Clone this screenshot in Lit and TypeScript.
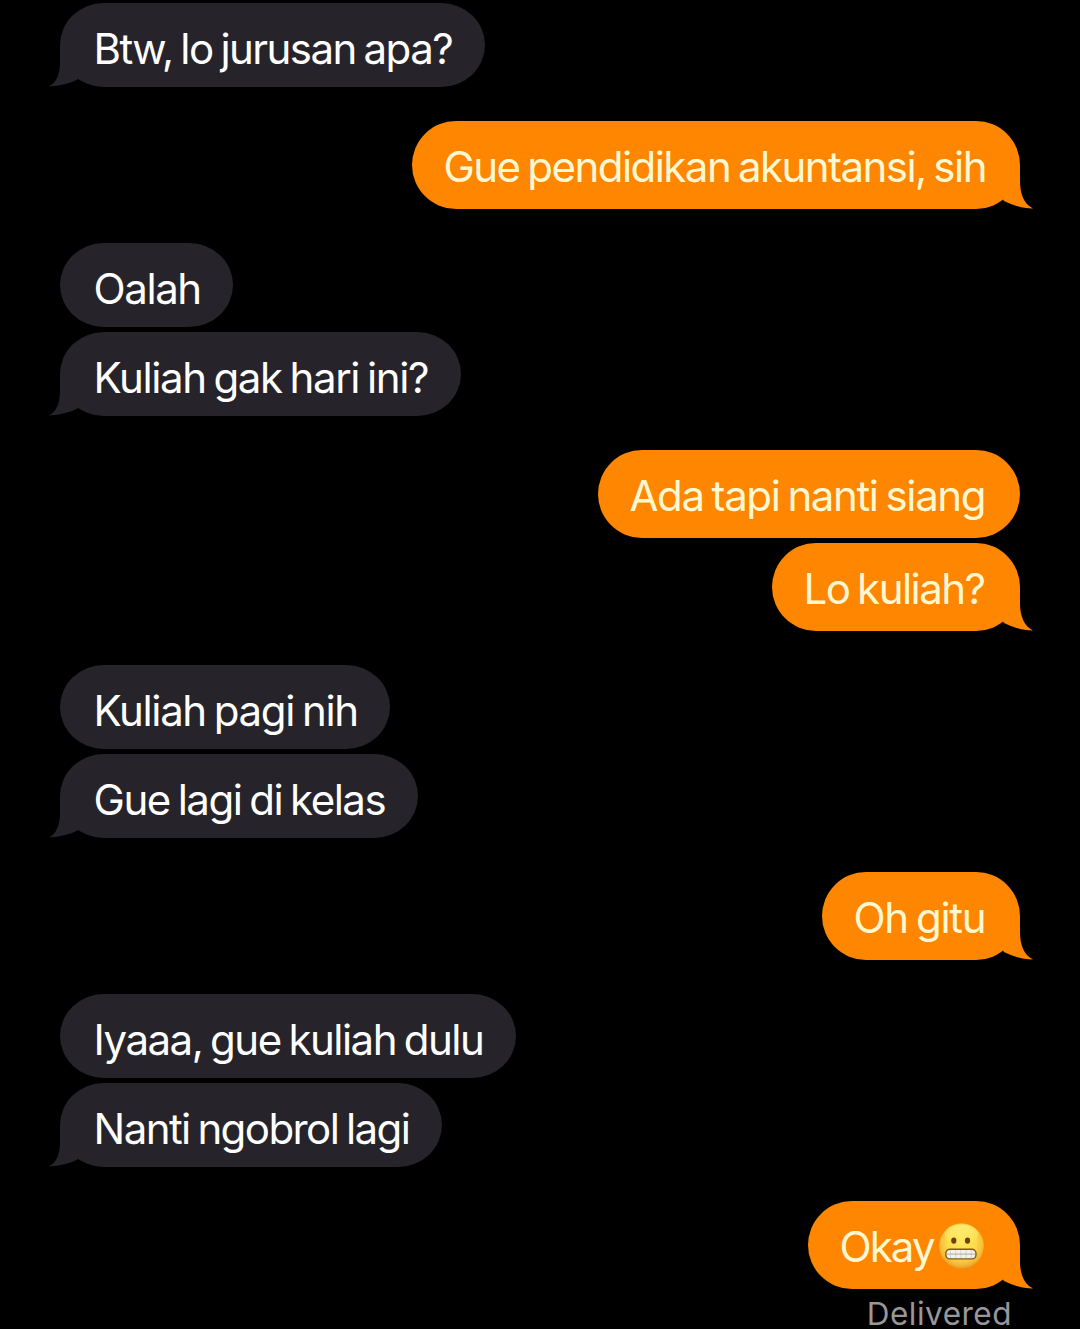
import { LitElement, html, css, svg, nothing } from "lit";

interface Message {
  text: string;
  width: number;
  tracking: number;
  emoji?: boolean;
}

interface Group {
  side: "in" | "out";
  messages: Message[];
}

const conversation: Group[] = [
  { side: "in", messages: [{ text: "Btw, lo jurusan apa?", width: 425, tracking: -1.55 }] },
  { side: "out", messages: [{ text: "Gue pendidikan akuntansi, sih", width: 608, tracking: -1.54 }] },
  {
    side: "in",
    messages: [
      { text: "Oalah", width: 173, tracking: -1.42 },
      { text: "Kuliah gak hari ini?", width: 401, tracking: -1.4 },
    ],
  },
  {
    side: "out",
    messages: [
      { text: "Ada tapi nanti siang", width: 422, tracking: -1.38 },
      { text: "Lo kuliah?", width: 248, tracking: -1.54 },
    ],
  },
  {
    side: "in",
    messages: [
      { text: "Kuliah pagi nih", width: 330, tracking: -1.36 },
      { text: "Gue lagi di kelas", width: 358, tracking: -1.48 },
    ],
  },
  { side: "out", messages: [{ text: "Oh gitu", width: 198, tracking: -1.27 }] },
  {
    side: "in",
    messages: [
      { text: "Iyaaa, gue kuliah dulu", width: 456, tracking: -1.51 },
      { text: "Nanti ngobrol lagi", width: 382, tracking: -1.58 },
    ],
  },
  { side: "out", messages: [{ text: "Okay", width: 212, tracking: -1.9, emoji: true }] },
];

const grimace = html`<svg class="emoji" viewBox="0 0 45 46" role="img" aria-label="😬">
  <defs>
    <radialGradient id="face" cx="50%" cy="42%" r="58%">
      <stop offset="0" stop-color="#ffe65c" />
      <stop offset="0.55" stop-color="#fddb4a" />
      <stop offset="0.85" stop-color="#f5bb35" />
      <stop offset="1" stop-color="#e39a25" />
    </radialGradient>
    <linearGradient id="shine" x1="0" y1="0" x2="0" y2="1">
      <stop offset="0" stop-color="#fff27c" stop-opacity="0.8" />
      <stop offset="1" stop-color="#fff27c" stop-opacity="0" />
    </linearGradient>
  </defs>
  <ellipse cx="22.5" cy="23" rx="22.3" ry="22.8" fill="url(#face)" />
  <ellipse cx="22.5" cy="12" rx="16.5" ry="10.5" fill="url(#shine)" />
  <ellipse cx="14.8" cy="17.6" rx="2.6" ry="3.2" fill="#6b4207" />
  <ellipse cx="28.5" cy="17.6" rx="2.6" ry="3.2" fill="#6b4207" />
  <rect x="6.8" y="26.3" width="30.2" height="9.6" rx="4.2" fill="#f3f2ee" stroke="#80591d" stroke-width="1.4" />
  ${[11.5, 16.7, 21.9, 27.1, 32.3].map(
    (x) => svg`<path d="M${x} 27.2V35" stroke="#cdc9be" stroke-width="0.7" />`,
  )}
  <path d="M7.8 31.1H36" stroke="#aaa391" stroke-width="0.9" />
</svg>`;

const incomingTail = html`<svg class="tail" viewBox="0 0 40 44">
  <path d="M11 2V19C11 31 7.500 39.500 0 43.400C10.500 43 20.500 40.500 29 36.200L40 20V2Z" />
</svg>`;

const outgoingTail = html`<svg class="tail" viewBox="0 0 42 46">
  <path d="M29 2V18C29 31 33 41 42 45.500C32 45.500 22 42.500 13 38L2 20V2Z" />
</svg>`;

class ChatBubble extends LitElement {
  static properties = {
    message: { attribute: false },
    side: { type: String },
    tail: { type: Boolean },
  };

  declare message: Message;
  declare side: "in" | "out";
  declare tail: boolean;

  static styles = css`
    :host {
      display: block;
    }
    .bubble {
      position: relative;
      box-sizing: border-box;
      display: flex;
      align-items: flex-start;
      border-radius: 44px / 42px;
      font-family: Inter, "Liberation Sans", sans-serif;
      font-size: 42px;
      font-weight: 400;
      word-spacing: -2.5px;
      white-space: nowrap;
    }
    .in {
      height: 84px;
      padding: 6px 0 0 33.6px;
      line-height: 79px;
      background: #26242a;
      color: #fff;
    }
    .out {
      height: 88px;
      padding: 2px 0 0 31.5px;
      line-height: 87px;
      border-radius: 44px;
      background: #ff8600;
      color: #fff8d2;
    }
    .tail {
      position: absolute;
      bottom: 0;
    }
    .in .tail {
      left: -11px;
      width: 40px;
      height: 44px;
      fill: #26242a;
    }
    .out .tail {
      right: -13px;
      width: 42px;
      height: 46px;
      fill: #ff8600;
    }
    .emoji {
      width: 45px;
      height: 46px;
      margin: 19.5px 0 0 5px;
      flex: none;
    }
  `;

  render() {
    const { text, width, tracking, emoji } = this.message;
    return html`<div class="bubble ${this.side}" style="width:${width}px;letter-spacing:${tracking}px">
      ${this.tail ? (this.side === "in" ? incomingTail : outgoingTail) : nothing}
      <span>${text}</span>${emoji ? grimace : nothing}
    </div>`;
  }
}

class AppRoot extends LitElement {
  static styles = css`
    :host {
      display: block;
      height: 1329px;
      overflow: hidden;
      background: #000;
    }
    .thread {
      display: flex;
      flex-direction: column;
      gap: 34px;
      padding: 3px 60px 0;
    }
    .group {
      display: flex;
      flex-direction: column;
      gap: 5px;
    }
    .in {
      align-items: flex-start;
    }
    .out {
      align-items: flex-end;
    }
    .status {
      padding: 9px 68px 0 0;
      text-align: right;
      font: 400 31.5px/31px Inter, "Liberation Sans", sans-serif;
      letter-spacing: 0.5px;
      color: #98979a;
    }
  `;

  render() {
    return html`
      <div class="thread">
        ${conversation.map(
          ({ side, messages }) => html`<div class="group ${side}">
            ${messages.map(
              (m, i) => html`<chat-bubble .message=${m} side=${side} ?tail=${i === messages.length - 1}></chat-bubble>`,
            )}
          </div>`,
        )}
      </div>
      <div class="status">Delivered</div>
    `;
  }
}

customElements.define("chat-bubble", ChatBubble);
customElements.define("app-root", AppRoot);
